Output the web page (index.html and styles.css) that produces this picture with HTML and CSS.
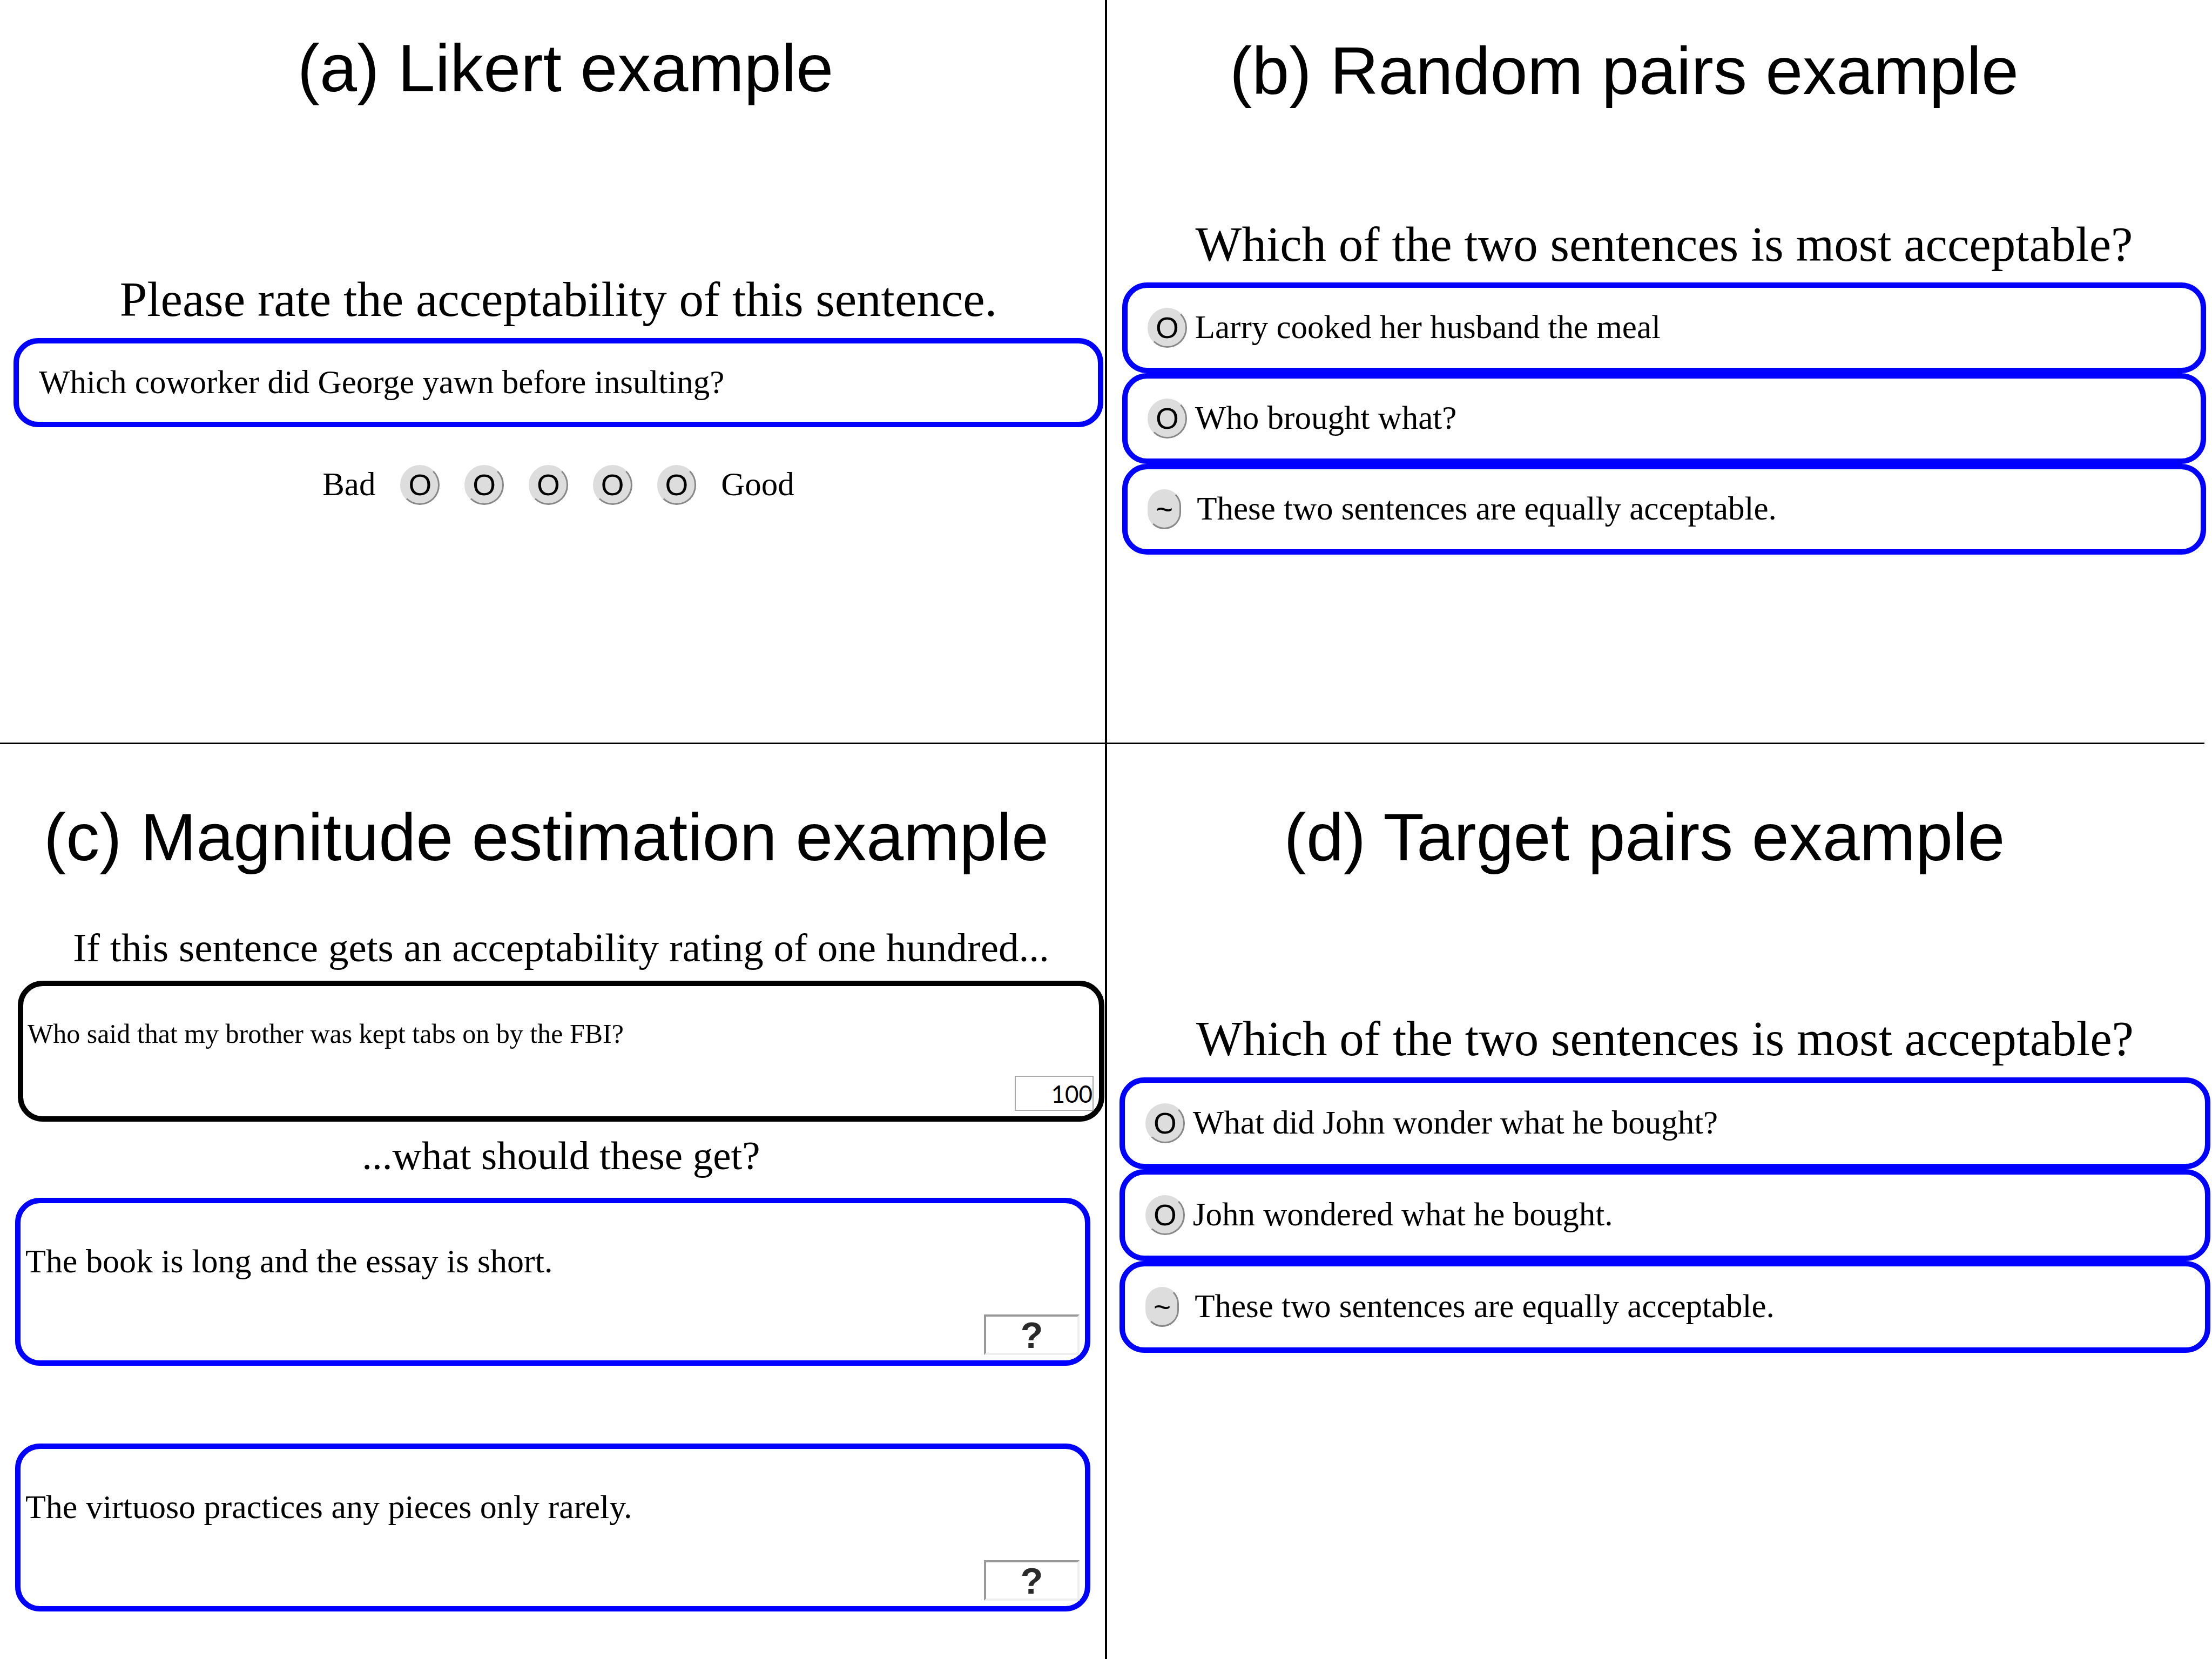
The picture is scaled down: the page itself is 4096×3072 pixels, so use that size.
FILE: index.html
```html
<!DOCTYPE html>
<html lang="en">
<head>
<meta charset="utf-8">
<title>Acceptability task examples</title>
<link rel="stylesheet" href="styles.css">
</head>
<body>
<main class="sheet">
  <section class="panel panel-likert">
    <h1 class="title">(a) Likert example</h1>
    <h2 class="prompt">Please rate the acceptability of this sentence.</h2>
    <p class="card card-line">Which coworker did George yawn before insulting?</p>
    <div class="scale">
      <span>Bad</span>
      <button type="button" class="pick">O</button>
      <button type="button" class="pick">O</button>
      <button type="button" class="pick">O</button>
      <button type="button" class="pick">O</button>
      <button type="button" class="pick">O</button>
      <span>Good</span>
    </div>
  </section>

  <section class="panel panel-random">
    <h1 class="title">(b) Random pairs example</h1>
    <h2 class="prompt">Which of the two sentences is most acceptable?</h2>
    <ul class="choices">
      <li class="card choice"><button type="button" class="pick">O</button><span>Larry cooked her husband the meal</span></li>
      <li class="card choice"><button type="button" class="pick">O</button><span>Who brought what?</span></li>
      <li class="card choice"><button type="button" class="pick pick-equal">~</button><span>These two sentences are equally acceptable.</span></li>
    </ul>
  </section>

  <section class="panel panel-magnitude">
    <h1 class="title">(c) Magnitude estimation example</h1>
    <h2 class="prompt">If this sentence gets an acceptability rating of one hundred...</h2>
    <div class="card reference">
      <label for="ref">Who said that my brother was kept tabs on by the FBI?</label>
      <input id="ref" class="score score-fixed" type="text" value="100" readonly>
    </div>
    <h2 class="prompt prompt-next">...what should these get?</h2>
    <div class="card item">
      <label for="item1">The book is long and the essay is short.</label>
      <input id="item1" class="score" type="text" value="?">
    </div>
    <div class="card item">
      <label for="item2">The virtuoso practices any pieces only rarely.</label>
      <input id="item2" class="score" type="text" value="?">
    </div>
  </section>

  <section class="panel panel-target">
    <h1 class="title">(d) Target pairs example</h1>
    <h2 class="prompt">Which of the two sentences is most acceptable?</h2>
    <ul class="choices">
      <li class="card choice"><button type="button" class="pick">O</button><span>What did John wonder what he bought?</span></li>
      <li class="card choice"><button type="button" class="pick">O</button><span>John wondered what he bought.</span></li>
      <li class="card choice"><button type="button" class="pick pick-equal">~</button><span>These two sentences are equally acceptable.</span></li>
    </ul>
  </section>

  <hr class="rule rule-across">
  <hr class="rule rule-down">
</main>
</body>
</html>
```
FILE: styles.css
```css
* {
  box-sizing: border-box;
}

body {
  margin: 0;
  background: #fff;
  color: #000;
  font-family: "Liberation Serif", "Times New Roman", serif;
}

h1, h2, p, ul {
  margin: 0;
  padding: 0;
  font-weight: normal;
}

/* Four panels, with the dividing lines in tracks of their own */
.sheet {
  display: grid;
  grid-template-columns: minmax(0, 1fr) 4px minmax(0, 1fr);
  grid-template-rows: minmax(min-content, 1375fr) 3px minmax(min-content, 1694fr);
  min-height: 100vh;
}

.rule {
  margin: 0;
  border: 0;
  background: #000;
}

.rule-across {
  grid-area: 2 / 1 / 3 / 4;
  margin-right: 14px;
}

.rule-down {
  grid-area: 1 / 2 / 4 / 3;
}

.panel {
  display: flex;
  flex-direction: column;
  font-size: 61px;
  line-height: 70px;
}

.panel-likert {
  grid-area: 1 / 1;
  padding: 55px 3px 0 25px;
}

.panel-random {
  grid-area: 1 / 3;
  padding: 60px 11px 0 28px;
}

.panel-magnitude {
  grid-area: 3 / 1;
  padding: 101px 1px 0 28px;
  font-size: 62px;
}

.panel-target {
  grid-area: 3 / 3;
  padding: 101px 3px 0 23px;
}

.title {
  font-family: "Liberation Sans", Arial, sans-serif;
  font-size: 124px;
  line-height: 142px;
  text-align: center;
}

.prompt {
  font-size: 91px;
  line-height: 104px;
  text-align: center;
}

.panel-likert .title { padding-left: 26px; }
.panel-random .title { padding-right: 148px; }
.panel-magnitude .title { padding-right: 50px; }
.panel-target .title { padding-right: 76px; }

.panel-likert .prompt { margin: 306px 0 19px; }
.panel-random .prompt { margin: 199px 0 18px; }
.panel-target .prompt { margin: 251px 0 19px; }

.card {
  border: 10px solid #00f;
  border-radius: 46px;
}

.card-line {
  padding: 47px 37px 48px;
  line-height: 50px;
}

.scale {
  display: flex;
  justify-content: center;
  align-items: baseline;
  gap: 46px;
  margin-top: 70px;
}

.pick {
  height: 74px;
  padding: 0 12px;
  border: 3px solid;
  border-color: #ddd #888 #888 #ddd;
  border-radius: 37px;
  background: #ddd;
  color: #000;
  font: 55px/68px "Liberation Sans", Arial, sans-serif;
}

.choices {
  list-style: none;
}

.choice {
  display: flex;
  align-items: baseline;
  gap: 15px;
  padding: 37px;
}

.panel-target .choice {
  padding: 38px;
}

.pick-equal {
  margin-right: 14px;
}

/* Magnitude estimation */
.panel-magnitude .prompt {
  margin: 91px 0 18px 5px;
  font-size: 75px;
  line-height: 86px;
}

.panel-magnitude .prompt-next {
  margin: 20px 0 35px 5px;
}

.reference,
.item {
  display: flex;
  flex-direction: column;
  justify-content: space-between;
}

.reference {
  min-height: 261px;
  margin-left: 5px;
  padding: 53px 10px 10px 8px;
  border-color: #000;
  font-size: 50px;
}

.item {
  min-height: 311px;
  margin-right: 26px;
  padding: 72px 10px 10px 9px;
}

.item + .item {
  margin-top: 144px;
}

.score {
  align-self: flex-end;
  width: 177px;
  height: 75px;
  padding: 0;
  border: 4px solid;
  border-color: #999 #eee #eee #999;
  border-radius: 0;
  background: #fff;
  color: #2a2a2a;
  font: bold 68px/67px "Liberation Sans", Arial, sans-serif;
  text-align: center;
}

.score-fixed {
  width: 146px;
  height: 65px;
  border: 2px solid #a9a9a9;
  color: #000;
  font: 44px/61px Lato, sans-serif;
  text-align: right;
}
```
